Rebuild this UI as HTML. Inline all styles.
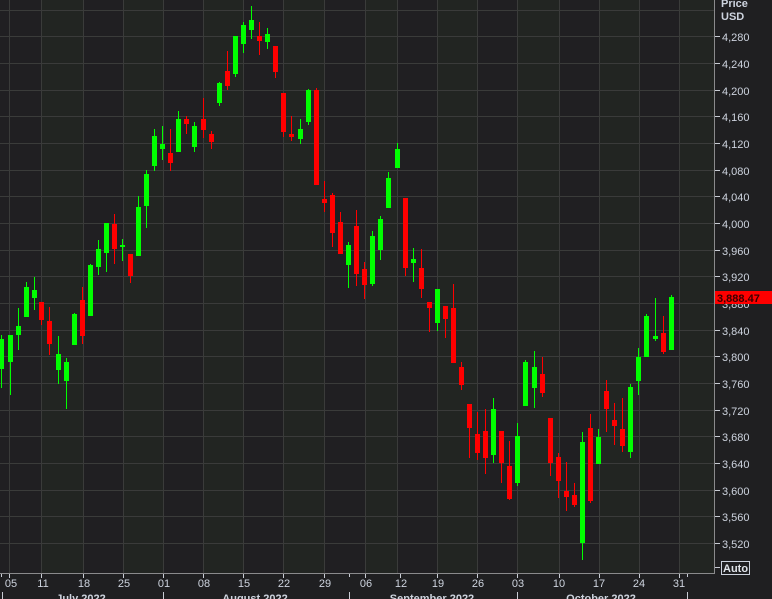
<!DOCTYPE html>
<html><head><meta charset="utf-8"><style>
html,body{margin:0;padding:0;background:#1f1f21;}
svg{display:block;font-family:"Liberation Sans",sans-serif;}
</style></head><body>
<svg width="772" height="599" viewBox="0 0 772 599" xmlns="http://www.w3.org/2000/svg">
<rect x="0" y="0" width="772" height="599" fill="#1f1f21"/>
<rect x="0" y="0" width="714" height="573" fill="#201f22"/>
<g fill="#222522">
<rect x="41" y="0" width="42" height="573"/><rect x="123" y="0" width="40" height="573"/>
<rect x="203" y="0" width="40" height="573"/><rect x="283" y="0" width="41" height="573"/>
<rect x="365" y="0" width="32" height="573"/><rect x="437" y="0" width="40" height="573"/>
<rect x="517" y="0" width="42" height="573"/><rect x="599" y="0" width="40" height="573"/>
<rect x="679" y="0" width="35" height="573"/>
</g>
<g stroke="#3a3b3a" stroke-width="1">
<path d="M9.5 0V573M41.5 0V573M83.5 0V573M123.5 0V573M163.5 0V573M203.5 0V573M243.5 0V573M283.5 0V573M324.5 0V573M365.5 0V573M397.5 0V573M437.5 0V573M477.5 0V573M517.5 0V573M559.5 0V573M599.5 0V573M639.5 0V573M679.5 0V573"/>
<path d="M0 10.5H714M0 36.5H714M0 63.5H714M0 90.5H714M0 116.5H714M0 143.5H714M0 170.5H714M0 196.5H714M0 223.5H714M0 250.5H714M0 276.5H714M0 303.5H714M0 330.5H714M0 356.5H714M0 383.5H714M0 410.5H714M0 436.5H714M0 463.5H714M0 490.5H714M0 516.5H714M0 543.5H714"/>
</g>
<g stroke="#00ff00" stroke-width="1">
<path d="M1.5 335V388M10.5 335V395M18.5 308V350M26.5 282V317M34.5 277V310M58.5 336V384M66.5 358V409M74.5 313V345M90.5 264V316M98.5 240V275M106.5 223V272M122.5 239V261M138.5 196V256M146.5 170V228M154.5 129V171M162.5 126V160M178.5 111V152M194.5 122V152M219.5 82V106M235.5 36V77M243.5 22V53M251.5 6V39M267.5 28V49M300.5 119V144M308.5 89V125M348.5 242V288M372.5 231V286M380.5 216V260M388.5 172V208M397.5 143V168M413.5 248V282M437.5 289V331M493.5 398V463M517.5 423V486M525.5 360V406M534.5 351V408M582.5 432V560M598.5 429V464M630.5 384V458M638.5 348V395M646.5 314V357M655.5 298V341M671.5 295V350"/>
</g>
<g stroke="#ff0000" stroke-width="1">
<path d="M41.5 302V325M49.5 307V355M82.5 287V344M114.5 214V264M130.5 254V283M170.5 129V171M186.5 116V134M203.5 98V138M211.5 131V149M227.5 51V90M259.5 22V55M275.5 46V78M283.5 93V137M291.5 116V141M316.5 88V185M324.5 181V212M332.5 193V247M340.5 212V254M356.5 210V286M364.5 262V299M405.5 198V276M421.5 249V298M429.5 302V332M445.5 306V338M453.5 284V363M461.5 362V390M469.5 404V458M477.5 412V460M485.5 409V474M501.5 431V483M509.5 441V500M542.5 357V397M550.5 418V476M558.5 453V498M566.5 462V511M574.5 483V507M590.5 414V503M606.5 380V432M614.5 403V445M622.5 398V452M663.5 316V354"/>
</g>
<g fill="#00ff00">
<rect x="-1" y="339" width="5" height="30"/><rect x="8" y="335" width="5" height="27"/><rect x="16" y="326" width="5" height="9"/><rect x="24" y="287" width="5" height="30"/><rect x="32" y="290" width="5" height="8"/><rect x="56" y="354" width="5" height="16"/><rect x="64" y="362" width="5" height="19"/><rect x="72" y="314" width="5" height="31"/><rect x="88" y="265" width="5" height="51"/><rect x="96" y="249" width="5" height="18"/><rect x="104" y="223" width="5" height="30"/><rect x="120" y="245" width="5" height="2"/><rect x="136" y="207" width="5" height="49"/><rect x="144" y="174" width="5" height="32"/><rect x="152" y="136" width="5" height="30"/><rect x="160" y="144" width="5" height="5"/><rect x="176" y="119" width="5" height="33"/><rect x="192" y="126" width="5" height="21"/><rect x="217" y="83" width="5" height="20"/><rect x="233" y="36" width="5" height="38"/><rect x="241" y="25" width="5" height="19"/><rect x="249" y="20" width="5" height="10"/><rect x="265" y="34" width="5" height="8"/><rect x="298" y="129" width="5" height="10"/><rect x="306" y="90" width="5" height="32"/><rect x="346" y="245" width="5" height="20"/><rect x="370" y="236" width="5" height="48"/><rect x="378" y="219" width="5" height="31"/><rect x="386" y="178" width="5" height="30"/><rect x="395" y="149" width="5" height="19"/><rect x="411" y="259" width="5" height="4"/><rect x="435" y="289" width="5" height="34"/><rect x="491" y="409" width="5" height="46"/><rect x="515" y="436" width="5" height="47"/><rect x="523" y="362" width="5" height="44"/><rect x="532" y="367" width="5" height="21"/><rect x="580" y="442" width="5" height="101"/><rect x="596" y="437" width="5" height="27"/><rect x="628" y="387" width="5" height="65"/><rect x="636" y="357" width="5" height="24"/><rect x="644" y="316" width="5" height="41"/><rect x="653" y="336" width="5" height="3"/><rect x="669" y="297" width="5" height="53"/>
</g>
<g fill="#ff0000">
<rect x="39" y="302" width="5" height="18"/><rect x="47" y="321" width="5" height="23"/><rect x="80" y="300" width="5" height="36"/><rect x="112" y="224" width="5" height="25"/><rect x="128" y="254" width="5" height="22"/><rect x="168" y="153" width="5" height="10"/><rect x="184" y="119" width="5" height="5"/><rect x="201" y="119" width="5" height="11"/><rect x="209" y="134" width="5" height="8"/><rect x="225" y="71" width="5" height="15"/><rect x="257" y="36" width="5" height="5"/><rect x="273" y="46" width="5" height="26"/><rect x="281" y="93" width="5" height="39"/><rect x="289" y="134" width="5" height="3"/><rect x="314" y="90" width="5" height="95"/><rect x="322" y="199" width="5" height="4"/><rect x="330" y="195" width="5" height="38"/><rect x="338" y="222" width="5" height="32"/><rect x="354" y="226" width="5" height="48"/><rect x="362" y="269" width="5" height="16"/><rect x="403" y="198" width="5" height="70"/><rect x="419" y="268" width="5" height="21"/><rect x="427" y="302" width="5" height="6"/><rect x="443" y="306" width="5" height="13"/><rect x="451" y="308" width="5" height="55"/><rect x="459" y="367" width="5" height="18"/><rect x="467" y="404" width="5" height="24"/><rect x="475" y="434" width="5" height="19"/><rect x="483" y="431" width="5" height="27"/><rect x="499" y="431" width="5" height="32"/><rect x="507" y="466" width="5" height="33"/><rect x="540" y="374" width="5" height="19"/><rect x="548" y="418" width="5" height="45"/><rect x="556" y="457" width="5" height="24"/><rect x="564" y="491" width="5" height="6"/><rect x="572" y="495" width="5" height="10"/><rect x="588" y="428" width="5" height="73"/><rect x="604" y="391" width="5" height="18"/><rect x="612" y="420" width="5" height="6"/><rect x="620" y="429" width="5" height="17"/><rect x="661" y="333" width="5" height="19"/>
</g>
<path d="M714.5 0V574M0 573.5H714.5" stroke="#8a8a8c" stroke-width="1"/>
<g stroke="#c8ccd4" stroke-width="1">
<path d="M715 36.5h5M715 63.5h5M715 90.5h5M715 116.5h5M715 143.5h5M715 170.5h5M715 196.5h5M715 223.5h5M715 250.5h5M715 276.5h5M715 303.5h5M715 330.5h5M715 356.5h5M715 383.5h5M715 410.5h5M715 436.5h5M715 463.5h5M715 490.5h5M715 516.5h5M715 543.5h5M715 567.5h5"/>
<path d="M1.5 574v3M9.5 574v4M41.5 574v4M83.5 574v4M123.5 574v4M163.5 574v4M203.5 574v4M243.5 574v4M283.5 574v4M324.5 574v4M349.5 574v3M365.5 574v4M400.5 574v4M437.5 574v4M477.5 574v4M517.5 574v4M559.5 574v4M599.5 574v4M639.5 574v4M679.5 574v4M687.5 574v3"/>
<path d="M2.5 592v7M163.5 592v7M349.5 592v7M517.5 592v7M687.5 592v7"/>
</g>
<g fill="#cdd3de" font-size="11">
<text x="721" y="7" font-weight="bold">Price</text>
<text x="721" y="20" font-weight="bold">USD</text>
<text x="722" y="41">4,280</text><text x="722" y="68">4,240</text><text x="722" y="95">4,200</text><text x="722" y="121">4,160</text><text x="722" y="148">4,120</text><text x="722" y="175">4,080</text><text x="722" y="201">4,040</text><text x="722" y="228">4,000</text><text x="722" y="255">3,960</text><text x="722" y="281">3,920</text><text x="722" y="308">3,880</text><text x="722" y="335">3,840</text><text x="722" y="361">3,800</text><text x="722" y="388">3,760</text><text x="722" y="415">3,720</text><text x="722" y="441">3,680</text><text x="722" y="468">3,640</text><text x="722" y="495">3,600</text><text x="722" y="521">3,560</text><text x="722" y="548">3,520</text>
</g>
<rect x="721.5" y="561.5" width="28" height="13" fill="none" stroke="#cdd3de"/>
<text x="723" y="572" fill="#e0e4ea" font-size="11" font-weight="bold">Auto</text>
<rect x="715" y="291" width="57" height="13" fill="#ff0000"/>
<text x="717" y="302" fill="#3a0000" font-size="11" font-weight="bold">3,888.47</text>
<g fill="#cdd3de" font-size="11" text-anchor="middle">
<text x="11" y="587">05</text><text x="43" y="587">11</text><text x="84" y="587">18</text><text x="124" y="587">25</text><text x="164" y="587">01</text><text x="204" y="587">08</text><text x="244" y="587">15</text><text x="284" y="587">22</text><text x="325" y="587">29</text><text x="366" y="587">06</text><text x="401" y="587">12</text><text x="438" y="587">19</text><text x="478" y="587">26</text><text x="518" y="587">03</text><text x="559" y="587">10</text><text x="599" y="587">17</text><text x="639" y="587">24</text><text x="679" y="587">31</text>
</g>
<g fill="#cdd3de" font-size="11" font-weight="bold" text-anchor="middle">
<text x="81" y="602">July 2022</text><text x="255" y="602">August 2022</text><text x="432" y="602">September 2022</text><text x="601" y="602">October 2022</text>
</g>
</svg>
</body></html>
